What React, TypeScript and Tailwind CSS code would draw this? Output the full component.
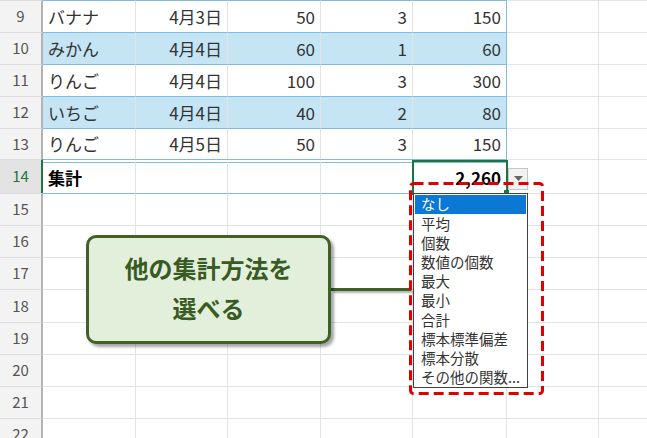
import React from 'react';

type Row = {
  n: number;
  h: string;
  cells?: [string, string, string, string, string];
  band?: boolean;
  total?: boolean;
};

const rows: Row[] = [
  { n: 9, h: 'h-[32px]', cells: ['バナナ', '4月3日', '50', '3', '150'] },
  { n: 10, h: 'h-[32px]', cells: ['みかん', '4月4日', '60', '1', '60'], band: true },
  { n: 11, h: 'h-[32px]', cells: ['りんご', '4月4日', '100', '3', '300'] },
  { n: 12, h: 'h-[32px]', cells: ['いちご', '4月4日', '40', '2', '80'], band: true },
  { n: 13, h: 'h-[31px]', cells: ['りんご', '4月5日', '50', '3', '150'] },
  { n: 14, h: 'h-[34px]', cells: ['集計', '', '', '', '2,260'], total: true },
  { n: 15, h: 'h-[32px]' },
  { n: 16, h: 'h-[32px]' },
  { n: 17, h: 'h-[32px]' },
  { n: 18, h: 'h-[33px]' },
  { n: 19, h: 'h-[32px]' },
  { n: 20, h: 'h-[32px]' },
  { n: 21, h: 'h-[32px]' },
  { n: 22, h: 'h-[32px]' },
];

const widths = ['w-[93px]', 'w-[92px]', 'w-[93px]', 'w-[92px]', 'w-[94px]', 'w-[92px]'];

const menu = ['なし', '平均', '個数', '数値の個数', '最大', '最小', '合計', '標本標準偏差', '標本分散', 'その他の関数...'];

function SheetRow({ row }: { row: Row }) {
  const inTable = row.n <= 14;
  const tableTop = row.n <= 15;
  const selected = row.total;

  return (
    <div className={`flex ${row.h}`}>
      <div
        className={[
          'flex w-[43px] shrink-0 items-center justify-center border-t border-r-2 border-t-[#dcdcdc] text-[15px]',
          selected
            ? 'bg-[#e3e3e3] border-r-[#217346] text-[#217346]'
            : 'bg-[#f3f3f3] border-r-[#b4b4b4] text-[#555]',
        ].join(' ')}
      >
        {row.n}
      </div>
      {widths.map((w, i) => {
        const isTableCol = i < 5;
        const text = row.cells && isTableCol ? row.cells[i] : '';
        const right = i >= 1;
        return (
          <div
            key={i}
            className={[
              'relative flex shrink-0 items-center px-[5px] text-[17px]',
              w,
              right ? 'justify-end' : 'justify-start',
              row.band && isTableCol ? 'bg-[#c5e5f5]' : 'bg-white',
              isTableCol && tableTop
                ? row.total
                  ? 'border-t-[4px] border-double border-t-[#7dbde3]'
                  : 'border-t border-t-[#7dbde3]'
                : 'border-t border-t-[#e3e3e3]',
              isTableCol && inTable && i === 4 ? 'border-r border-r-[#7dbde3]' : 'border-r border-r-[#e3e3e3]',
              row.total ? 'font-bold text-black' : 'text-[#333]',
            ].join(' ')}
          >
            {text}
            {selected && i === 4 ? (
              <>
                <div className="pointer-events-none absolute left-[-1px] top-[-3px] z-10 h-[35px] w-[96px] border-2 border-[#217346]" />
                <div className="absolute right-[-3px] bottom-[-2px] z-10 h-[5px] w-[5px] bg-[#217346]" />
              </>
            ) : null}
          </div>
        );
      })}
      <div className="flex-1 border-t border-t-[#e3e3e3] bg-white" />
    </div>
  );
}

export default function App() {
  return (
    <div
      className="relative h-[438px] w-[647px] overflow-hidden bg-white"
      style={{ fontFamily: '"Noto Sans CJK JP", "Noto Sans", sans-serif' }}
    >
      <div className="flex flex-col">
        {rows.map((row) => (
          <SheetRow key={row.n} row={row} />
        ))}
      </div>

      {/* dropdown button */}
      <div className="absolute left-[508px] top-[168px] z-20 flex h-[22px] w-[20px] items-center justify-center border border-[#c6c6c6] bg-[#f2f2f2]">
        <svg width="9" height="6" viewBox="0 0 9 6">
          <path d="M0 0H9L4.5 5Z" fill="#666" />
        </svg>
      </div>

      {/* dropdown list */}
      <div className="absolute left-[413px] top-[193px] z-20 flex h-[195px] w-[115px] flex-col border border-[#404040] bg-white px-px pt-px">
        {menu.map((item, i) => (
          <div
            key={item}
            className={[
              'flex h-[19.3px] items-center whitespace-nowrap pl-[6px] text-[14.5px] leading-none',
              i === 0 ? 'bg-[#0a78d4] text-white' : 'text-[#333]',
            ].join(' ')}
          >
            {item}
          </div>
        ))}
      </div>

      {/* red dashed highlight */}
      <svg className="absolute left-[409px] top-[182px] z-30" width="136" height="214" viewBox="0 0 136 214">
        <rect
          x="1.5"
          y="1.5"
          width="132"
          height="210"
          rx="3"
          fill="none"
          stroke="#e00000"
          strokeWidth="3"
          strokeDasharray="10 5"
        />
      </svg>

      {/* connector */}
      <div className="absolute left-[331px] top-[288px] z-20 h-[3px] w-[80px] bg-[#3f6128] shadow-[2px_2px_2px_rgba(0,0,0,0.3)]" />

      {/* callout */}
      <div className="absolute left-[86px] top-[235px] z-20 flex h-[109px] w-[245px] flex-col items-center rounded-[10px] border-[3px] border-[#3f6128] bg-[#e2efda] pt-[10px] text-[24px] font-bold leading-[40px] text-[#3a5a24] shadow-[3px_3px_3px_rgba(0,0,0,0.35)]">
        <span>他の集計方法を</span>
        <span>選べる</span>
      </div>
    </div>
  );
}
